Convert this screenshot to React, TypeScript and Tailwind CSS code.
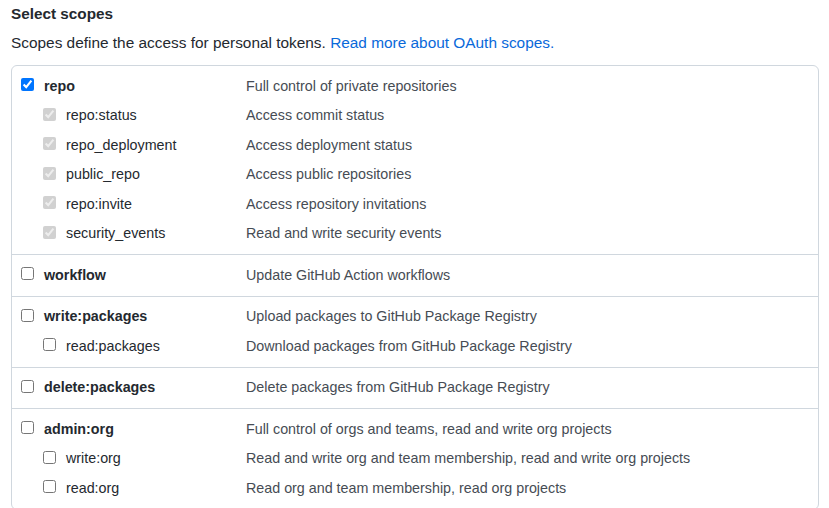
import React from "react";

type Scope = {
  name: string;
  desc: string;
  checked?: boolean;
  disabled?: boolean;
};

type Group = {
  main: Scope;
  subs: Scope[];
};

const groups: Group[] = [
  {
    main: { name: "repo", desc: "Full control of private repositories", checked: true },
    subs: [
      { name: "repo:status", desc: "Access commit status", checked: true, disabled: true },
      { name: "repo_deployment", desc: "Access deployment status", checked: true, disabled: true },
      { name: "public_repo", desc: "Access public repositories", checked: true, disabled: true },
      { name: "repo:invite", desc: "Access repository invitations", checked: true, disabled: true },
      { name: "security_events", desc: "Read and write security events", checked: true, disabled: true },
    ],
  },
  { main: { name: "workflow", desc: "Update GitHub Action workflows" }, subs: [] },
  {
    main: { name: "write:packages", desc: "Upload packages to GitHub Package Registry" },
    subs: [{ name: "read:packages", desc: "Download packages from GitHub Package Registry" }],
  },
  { main: { name: "delete:packages", desc: "Delete packages from GitHub Package Registry" }, subs: [] },
  {
    main: { name: "admin:org", desc: "Full control of orgs and teams, read and write org projects" },
    subs: [
      { name: "write:org", desc: "Read and write org and team membership, read and write org projects" },
      { name: "read:org", desc: "Read org and team membership, read org projects" },
    ],
  },
];

function ScopeRow({ scope, sub }: { scope: Scope; sub?: boolean }) {
  return (
    <div className="flex h-[29.5px] items-center">
      <div className={`flex w-[234px] shrink-0 items-center ${sub ? "pl-[31px]" : "pl-[9px]"}`}>
        <input
          type="checkbox"
          defaultChecked={scope.checked}
          disabled={scope.disabled}
          className="m-0 -mt-[3px] h-[13px] w-[13px] shrink-0"
        />
        <span className={`ml-[10px] text-[#24292f] ${sub ? "" : "font-bold"}`}>{scope.name}</span>
      </div>
      <span className="text-[#464c54]">{scope.desc}</span>
    </div>
  );
}

export default function App() {
  return (
    <div
      className="min-h-[508px] bg-white pl-[11px] pr-[10px] pt-[4px] text-[14.3px] text-[#24292f]"
      style={{ fontFamily: '"Liberation Sans", Arial, sans-serif' }}
    >
      <h3 className="text-[15.3px] font-bold leading-[20px]">Select scopes</h3>
      <p className="mt-[9px] text-[15.4px] leading-[20px]">
        Scopes define the access for personal tokens.{" "}
        <a href="#" className="text-[#0969da]">
          Read more about OAuth scopes.
        </a>
      </p>
      <div className="mt-[12px] rounded-md border border-[#d0d7de]">
        {groups.map((g, i) => (
          <div key={g.main.name} className={`py-[5.5px] ${i > 0 ? "border-t border-[#d0d7de]" : ""}`}>
            <ScopeRow scope={g.main} />
            {g.subs.map((s) => (
              <ScopeRow key={s.name} scope={s} sub />
            ))}
          </div>
        ))}
      </div>
    </div>
  );
}
